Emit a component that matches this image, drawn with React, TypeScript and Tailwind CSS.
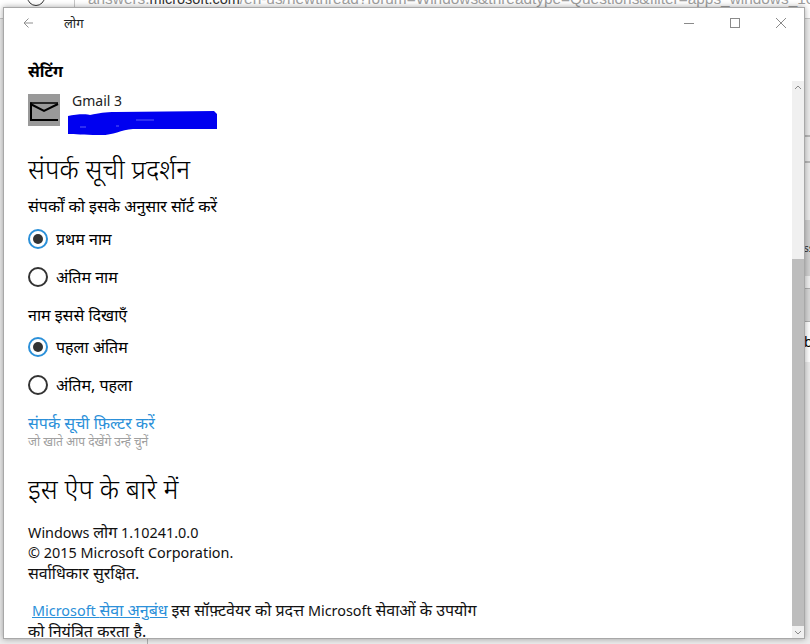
import React from "react";

function D({ children }: { children: React.ReactNode }) {
  return <span className="text-[16px]">{children}</span>;
}

function Radio({ on, label }: { on?: boolean; label: string }) {
  return (
    <div className="flex h-[38px] items-center">
      <span className={"flex h-5 w-5 items-center justify-center rounded-full border-2 " + (on ? "border-[#2b90d9]" : "border-[#333333]")}>
        {on && <span className="h-[10px] w-[10px] rounded-full bg-[#333333]" />}
      </span>
      <span className="ml-2 text-base leading-5 text-black">{label}</span>
    </div>
  );
}

export default function App() {
  return (
    <div className="relative h-[644px] w-[810px] overflow-hidden bg-[#ececec] font-['Noto_Sans','Liberation_Sans',sans-serif]">
      {/* browser behind the window */}
      <div className="absolute left-0 top-0 flex h-[19px] w-[810px] items-end border-b border-[#c8c8c8] bg-white">
        <div className="absolute left-[27px] top-[-12px] h-[18px] w-[18px] rounded-full border border-[#333333]" />
        <div className="absolute left-[74px] top-0 h-[19px] w-px bg-[#c8c8c8]" />
        <div className="absolute left-[88px] top-[-11px] whitespace-nowrap font-['Liberation_Sans',sans-serif] text-[15.400px] leading-5 text-[#a0a0a0]">
          answers.<span className="text-[14.500px] text-[#333333]">microsoft.com</span>/en-us/newthread?forum=Windows&amp;threadtype=Questions&amp;filter=apps_windows_10
        </div>
      </div>
      <div className="absolute right-0 top-[135px] h-[2px] w-[6px] bg-[#b8b8b8]" />
      <div className="absolute right-0 top-[161px] h-[2px] w-[6px] bg-[#b8b8b8]" />
      <div className="absolute right-0 top-[220px] flex w-[6px] flex-col">
        <div className="flex h-[56px] items-center overflow-hidden bg-[#d2d2d2] text-[10px] text-[#333333]">ss</div>
        <div className="h-3 bg-[#f0f0f0]" />
        <div className="h-[34px] border-y border-[#b0b0b0] bg-[#d8d8d8]" />
        <div className="flex h-[40px] items-center overflow-hidden bg-white text-sm text-black">b</div>
      </div>
      <div className="absolute bottom-0 left-[147px] h-[5px] w-px bg-[#b0b0b0]" />

      {/* app window */}
      <div className="absolute left-[3px] top-[7px] h-[632px] w-[802px] overflow-hidden border border-[#a8a8a8] bg-white shadow-[0_0_6px_rgba(0,0,0,0.35)]">
        <div className="flex h-[30px] items-center pl-[19px]">
          <svg width="10" height="10" viewBox="0 0 10 10" fill="none" stroke="#8f8f8f" strokeWidth="1">
            <path d="M10 5H1M5.500 .5 1 5l4.500 4.500" />
          </svg>
          <span className="ml-[31px] text-[13px] leading-5 text-[#222222]">लोग</span>
          <div className="ml-auto flex items-center pr-[18px]">
            <svg width="10" height="10" viewBox="0 0 10 10" stroke="#8a8a8a" fill="none">
              <path d="M0 5.500H10" />
            </svg>
            <svg className="ml-[36px]" width="10" height="10" viewBox="0 0 10 10" stroke="#8a8a8a" fill="none">
              <rect x=".5" y=".5" width="9" height="9" />
            </svg>
            <svg className="ml-[36px]" width="10" height="10" viewBox="0 0 10 10" stroke="#8a8a8a" fill="none">
              <path d="M0 0 10 10M10 0 0 10" />
            </svg>
          </div>
        </div>

        <div className="pl-6 pt-[23px] text-black">
          <h2 className="text-base font-bold leading-5">सेटिंग</h2>

          <div className="mt-[3px] flex h-[46px] items-start">
            <div className="mt-[10px] h-8 w-8 bg-[#999999]">
              <svg width="32" height="32" viewBox="0 0 32 32" fill="none" stroke="#000000">
                <path d="M3 8.500V26H30" strokeWidth="2" />
                <path d="M2 9H30" strokeWidth="1.500" />
                <path d="M2.500 10 16 17 30 10" strokeWidth="2" />
              </svg>
            </div>
            <div className="relative ml-3 pt-[7px]">
              <div className="text-sm leading-5 text-[#222222]">Gmail 3</div>
              <svg className="absolute left-[-4px] top-[27px]" width="150" height="26" viewBox="0 0 150 26">
                <path d="M0 5C8 3 20 3 22 4C32 2 36 1 48 1L146 0L149 3V18L65 18C52 19 44 25 30 24C16 24 6 23 0 23Z" fill="#0000f0" />
                <path d="M68 9H86M12 16H18M48 15H51" stroke="#5a5af5" strokeWidth="1" />
              </svg>
            </div>
          </div>

          <h1 className="mt-[21px] text-[26.400px] font-light leading-9">संपर्क सूची प्रदर्शन</h1>
          <p className="mt-[7px] text-base leading-6">संपर्कों को इसके अनुसार सॉर्ट करें</p>
          <div className="mt-[2px]">
            <Radio on label="प्रथम नाम" />
            <Radio label="अंतिम नाम" />
          </div>
          <p className="mt-[7px] text-base leading-6">नाम इससे दिखाएँ</p>
          <div className="mt-[1px]">
            <Radio on label="पहला अंतिम" />
            <Radio label="अंतिम, पहला" />
          </div>
          <a className="mt-[7px] block text-base leading-6 text-[#2b90d9]">संपर्क सूची फ़िल्टर करें</a>
          <p className="mt-[-1px] text-xs leading-4 text-[#a0a0a0]">जो खाते आप देखेंगे उन्हें चुनें</p>

          <h1 className="mt-[21px] text-[26.400px] font-light leading-9">इस ऐप के बारे में</h1>
          <div className="mt-[15px] text-[14.400px] leading-5 text-[#111111]">
            <p>Windows <D>लोग</D> 1.10241.0.0</p>
            <p>© 2015 Microsoft Corporation.</p>
            <p><D>सर्वाधिकार सुरक्षित.</D></p>
          </div>
          <p className="mt-[16px] w-[465px] text-[14.400px] leading-5 text-[#111111]">
            <a className="ml-1 text-[#2b90d9] underline">Microsoft <D>सेवा अनुबंध</D></a> <D>इस सॉफ़्टवेयर को प्रदत्त</D> Microsoft <D>सेवाओं के उपयोग को नियंत्रित करता है.</D>
          </p>
        </div>

        {/* scrollbar */}
        <div className="absolute bottom-0 right-0 top-[73px] flex w-3 flex-col bg-[#f0f0f0]">
          <div className="flex h-[12px] items-center justify-center">
            <svg width="8" height="5" viewBox="0 0 8 5" fill="none" stroke="#8a8a8a"><path d="M1 4 4 1l3 3" /></svg>
          </div>
          <div className="mt-[166px] flex-1 bg-[#bdbdbd]" />
          <div className="flex h-[12px] items-center justify-center">
            <svg width="8" height="5" viewBox="0 0 8 5" fill="none" stroke="#8a8a8a"><path d="M1 1 4 4l3-3" /></svg>
          </div>
        </div>
      </div>
    </div>
  );
}
